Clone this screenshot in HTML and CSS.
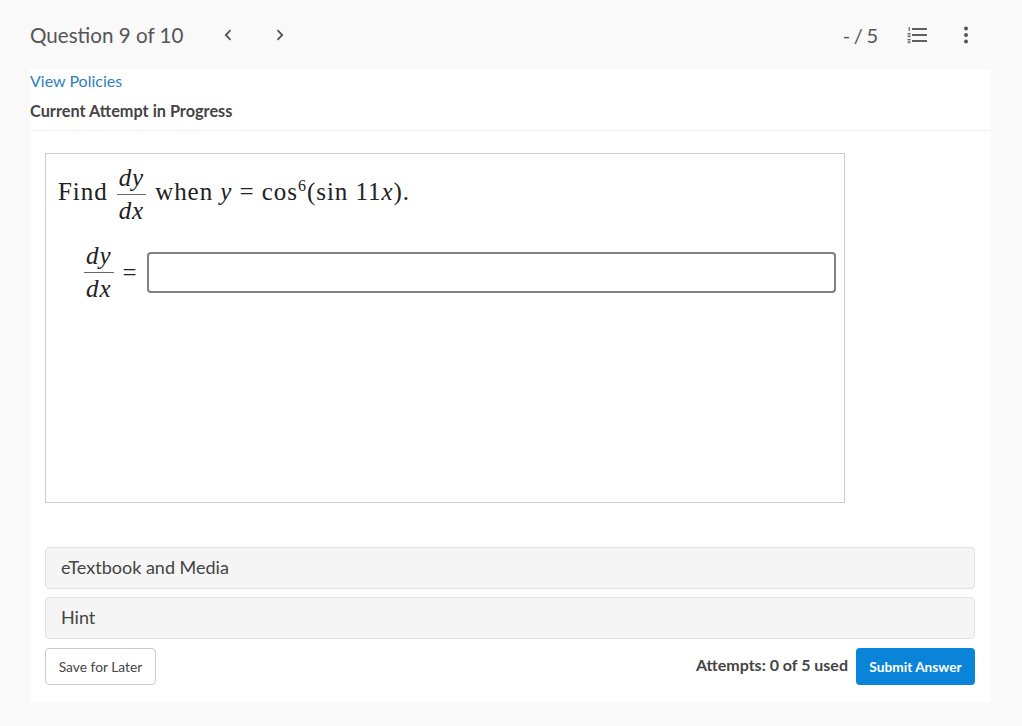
FILE: index.html
```html
<!DOCTYPE html>
<html lang="en">
<head>
<meta charset="utf-8">
<title>Question 9 of 10</title>
<link rel="stylesheet" href="styles.css">
</head>
<body>
<header class="topbar">
  <div class="topbar-left">
    <span class="q-title">Question 9 of 10</span>
    <span class="nav-group">
      <svg class="chev" width="10" height="14" viewBox="0 0 10 14"><path d="M7.5 2.2 2.8 7l4.7 4.8" fill="none" stroke="#555" stroke-width="1.8"/></svg>
      <svg class="chev" width="10" height="14" viewBox="0 0 10 14"><path d="M2.5 2.2 7.2 7l-4.7 4.8" fill="none" stroke="#555" stroke-width="1.8"/></svg>
    </span>
  </div>
  <div class="topbar-right">
    <span class="score">- / 5</span>
    <svg class="list-icon" width="22" height="18" viewBox="0 0 22 18">
      <g fill="#5f5f5f">
        <rect x="6" y="2" width="15" height="2"/>
        <rect x="6" y="8" width="15" height="2"/>
        <rect x="6" y="14" width="15" height="2"/>
        <rect x="2.6" y="1" width="1.2" height="4"/>
        <rect x="1.6" y="7" width="3" height="1"/>
        <rect x="1.6" y="8.6" width="3" height="1"/>
        <rect x="1.6" y="10.2" width="3" height="1"/>
        <rect x="1.6" y="13" width="3" height="1"/>
        <rect x="1.6" y="14.6" width="3" height="1"/>
        <rect x="1.6" y="16.2" width="3" height="1"/>
      </g>
    </svg>
    <svg class="dots" width="6" height="18" viewBox="0 0 6 18"><g fill="#555"><circle cx="3" cy="2.5" r="2"/><circle cx="3" cy="9" r="2"/><circle cx="3" cy="15.5" r="2"/></g></svg>
  </div>
</header>
<main class="panel">
  <div class="panel-head">
    <a class="policies" href="#">View Policies</a>
    <div class="attempt">Current Attempt in Progress</div>
  </div>
  <div class="body">
    <section class="question">
      <div class="math-line">
        <span class="math-text">Find</span>
        <span class="frac"><span class="num"><i>dy</i></span><span class="den"><i>dx</i></span></span>
        <span class="math-text">when <i>y</i> = cos<sup>6</sup>(sin 11<i>x</i>).</span>
      </div>
      <div class="answer-line">
        <span class="frac"><span class="num"><i>dy</i></span><span class="den"><i>dx</i></span></span>
        <span class="eq">=</span>
        <input class="answer" type="text" aria-label="Answer">
      </div>
    </section>
    <div class="accordion accordion-first">eTextbook and Media</div>
    <div class="accordion">Hint</div>
    <div class="actions">
      <button class="btn-save" type="button">Save for Later</button>
      <div class="actions-right">
        <span class="attempts">Attempts: 0 of 5 used</span>
        <button class="btn-submit" type="button">Submit Answer</button>
      </div>
    </div>
  </div>
</main>
</body>
</html>
```
FILE: styles.css
```css
* { box-sizing: border-box; }
html, body { margin: 0; padding: 0; }
body {
  width: 1022px;
  height: 726px;
  overflow: hidden;
  background: #f9f9f9;
  font-family: Lato, sans-serif;
  color: #444;
}
.topbar {
  height: 69px;
  padding: 0 53px 0 30px;
  display: flex;
  justify-content: space-between;
  align-items: center;
}
.topbar-left { display: flex; align-items: center; }
.q-title { font-size: 20.6px; color: #555; }
.nav-group { display: flex; gap: 42px; margin-left: 40px; }
.topbar-right { display: flex; align-items: center; }
.score { font-size: 20px; color: #555; word-spacing: -1.5px; }
.list-icon { margin-left: 28px; }
.dots { margin-left: 35px; }
.panel {
  margin-left: 30px;
  width: 961px;
  height: 633px;
  background: #fff;
}
.panel-head {
  height: 62px;
  border-bottom: 1px solid #f1f1f1;
  display: flex;
  flex-direction: column;
  align-items: flex-start;
}
.policies {
  font-size: 16px;
  line-height: 24px;
  color: #2f80c0;
  text-decoration: none;
}
.attempt {
  font-size: 16.3px;
  font-weight: 700;
  line-height: 20px;
  margin-top: 8px;
  color: #444;
}
.body { padding: 22px 16px 0 15px; }
.question {
  width: 800px;
  height: 350px;
  border: 1px solid #ccc;
  padding: 8px 8px 6px 12px;
  font-family: "Liberation Serif", "Times New Roman", serif;
  font-size: 25px;
  letter-spacing: 0.95px;
  color: #222;
}
.math-line { display: flex; align-items: center; gap: 9px; height: 64px; }
.math-text { margin-bottom: 4px; }
.math-line sup { font-size: 16px; line-height: 0; }
.frac {
  display: inline-flex;
  flex-direction: column;
  align-items: stretch;
  text-align: center;
  line-height: 31px;
}
.num { border-bottom: 1.5px solid #666; padding: 0 2px; line-height: 29px; padding-bottom: 2px; }
.den { padding: 0 2px; }
.answer-line {
  display: flex;
  align-items: center;
  margin-top: 15px;
  margin-left: 26px;
}
.eq { margin-left: 9px; width: 28px; }
.answer {
  flex: none;
  width: 689px;
  height: 41px;
  border: 2px solid #808080;
  border-radius: 4px;
  background: #fff;
}
.accordion {
  width: 930px;
  height: 42px;
  margin-top: 8px;
  padding: 0 0 2px 15px;
  display: flex;
  align-items: center;
  background: #f5f5f5;
  border: 1px solid #e3e3e3;
  border-radius: 4px;
  font-size: 18px;
  color: #444;
}
.accordion-first { margin-top: 44px; }
.actions {
  width: 930px;
  margin-top: 9px;
  display: flex;
  justify-content: space-between;
  align-items: flex-start;
}
.actions-right { display: flex; align-items: flex-start; gap: 8px; }
.btn-save {
  width: 111px;
  height: 37px;
  padding: 0;
  background: #fff;
  border: 1px solid #ccc;
  border-radius: 4px;
  font-family: Lato, sans-serif;
  font-size: 13.8px;
  color: #444;
}
.attempts {
  font-size: 16px;
  font-weight: 700;
  line-height: 34px;
  color: #444;
}
.btn-submit {
  width: 119px;
  height: 37px;
  padding: 0;
  background: #0a84d8;
  border: 0;
  border-radius: 4px;
  font-family: Lato, sans-serif;
  font-size: 13.7px;
  font-weight: 700;
  color: #fff;
}
```
